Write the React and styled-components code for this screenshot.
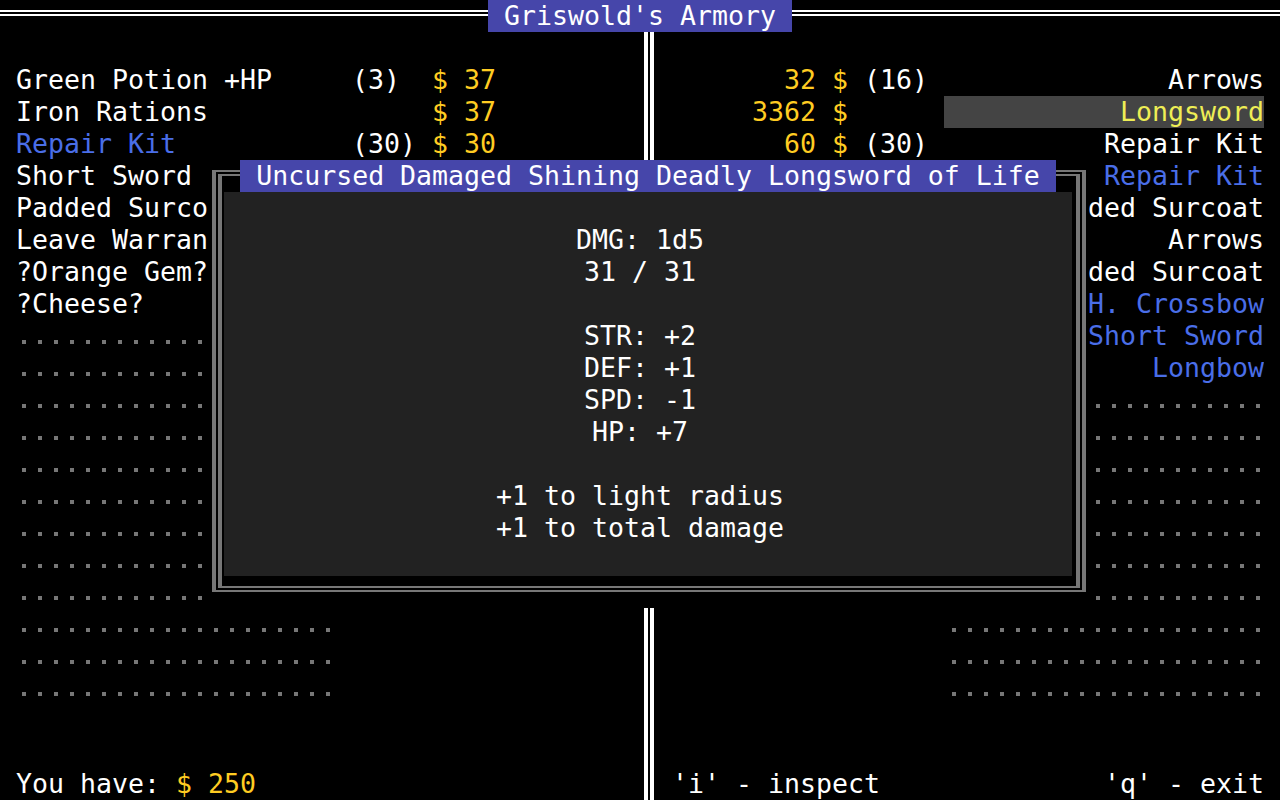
import React from "react";
import styled, { createGlobalStyle } from "styled-components";

const GlobalStyle = createGlobalStyle`
  html, body {
    margin: 0;
    padding: 0;
    background: #000;
  }
`;

// palette of the shop screen
const WHITE = "#ffffff";
const GOLD = "#ffcc22";
const BLUE = "#4a6ee8";
const PALE = "#eeee55";
const LINE = "#777777";

// rows under the inspect window show only the part of the name that sticks out
const leftItems = [
    { name: "Green Potion +HP", qty: "(3)", price: 37 },
    { name: "Iron Rations", qty: "", price: 37 },
    { name: "Repair Kit", qty: "(30)", price: 30, tone: "blue" },
    { name: "Short Sword" },
    { name: "Padded Surcoat" },
    { name: "Leave Warrant" },
    { name: "?Orange Gem?" },
    { name: "?Cheese?" },
];

const rightItems = [
    { name: "Arrows", qty: "(16)", price: 32 },
    { name: "Longsword", qty: "", price: 3362, tone: "selected" },
    { name: "Repair Kit", qty: "(30)", price: 60 },
    { name: "Repair Kit", tone: "blue" },
    { name: "Padded Surcoat" },
    { name: "Arrows" },
    { name: "Padded Surcoat" },
    { name: "H. Crossbow", tone: "blue" },
    { name: "Short Sword", tone: "blue" },
    { name: "Longbow", tone: "blue" },
];

const SLOTS = 20;

const stats = [
    "DMG: 1d5",
    "31 / 31",
    "",
    "STR: +2",
    "DEF: +1",
    "SPD: -1",
    "HP: +7",
    "",
    "+1 to light radius",
    "+1 to total damage",
];

const App = () => {
    const leftEmpty = SLOTS - leftItems.length;
    const rightEmpty = SLOTS - rightItems.length;
    return (
        <>
            <GlobalStyle />
            <Screen>
                <Header>
                    <Rule />
                    <Title>Griswold's Armory</Title>
                    <Rule />
                </Header>

                <Body>
                    {/* 상점 쪽 */}
                    <Panel>
                        <List>
                            {leftItems.map((item, i) => (
                                <LeftRow key={i}>
                                    <Name $tone={item.tone}>{item.name}</Name>
                                    <span />
                                    <span>{item.qty}</span>
                                    <span />
                                    {item.price != null && <Money>$ {item.price}</Money>}
                                </LeftRow>
                            ))}
                            {Array.from({ length: leftEmpty }).map((_, i) => (
                                <LeftRow key={"e" + i}>
                                    <Slot $offset={6} />
                                </LeftRow>
                            ))}
                        </List>
                        <Footer>
                            <span>
                                You have: <Money>$ 250</Money>
                            </span>
                        </Footer>
                    </Panel>

                    <DividerCell>
                        <Divider />
                    </DividerCell>

                    {/* 플레이어 쪽 */}
                    <Panel $right>
                        <List>
                            {rightItems.map((item, i) => (
                                <RightRow key={i}>
                                    <Price>{item.price}</Price>
                                    <Money>{item.price != null ? " $ " : ""}</Money>
                                    <span>{item.qty}</span>
                                    <Name $tone={item.tone} $right>
                                        {item.name}
                                    </Name>
                                </RightRow>
                            ))}
                            {Array.from({ length: rightEmpty }).map((_, i) => (
                                <RightRow key={"e" + i}>
                                    <span />
                                    <span />
                                    <span />
                                    <Slot $offset={8} />
                                </RightRow>
                            ))}
                        </List>
                        <Footer $spread>
                            <span>'i' - inspect</span>
                            <span>'q' - exit</span>
                        </Footer>
                    </Panel>
                </Body>

                <Modal>
                    <ModalTitle>Uncursed Damaged Shining Deadly Longsword of Life</ModalTitle>
                    <Frame>
                        <InnerFrame>
                            <Sheet>
                                {stats.map((line, i) => (
                                    <StatLine key={i}>{line}</StatLine>
                                ))}
                            </Sheet>
                        </InnerFrame>
                    </Frame>
                </Modal>
            </Screen>
        </>
    );
};

export default App;

const Screen = styled.div`
    position: relative;
    width: 1280px;
    height: 800px;
    overflow: hidden;
    background: #000;
    color: ${WHITE};
    font-family: "DejaVu Sans Mono", "Liberation Mono", monospace;
    font-size: 26.575px;
    line-height: 32px;
    white-space: pre;
    display: flex;
    flex-direction: column;
`;

const Header = styled.div`
    height: 32px;
    display: flex;
`;

const Rule = styled.div`
    flex: 1;
    height: 2px;
    margin-top: 10px;
    border-top: 2px solid ${WHITE};
    border-bottom: 2px solid ${WHITE};
`;

const Title = styled.div`
    background: #4646aa;
    padding: 0 16px;
    height: 32px;
`;

const Body = styled.div`
    flex: 1;
    display: grid;
    grid-template-columns: 640px 16px 624px;
`;

const Panel = styled.div`
    display: flex;
    flex-direction: column;
    padding: ${(p) => (p.$right ? "32px 16px 0 0" : "32px 0 0 16px")};
`;

const List = styled.div`
    display: flex;
    flex-direction: column;
`;

const LeftRow = styled.div`
    height: 32px;
    display: grid;
    grid-template-columns: 320px 16px 64px 16px 1fr;
`;

const RightRow = styled.div`
    height: 32px;
    display: grid;
    grid-template-columns: 160px 48px 80px 320px;
`;

const Name = styled.span`
    overflow: hidden;
    text-align: ${(p) => (p.$right ? "right" : "left")};
    color: ${(p) =>
        p.$tone === "blue" ? BLUE : p.$tone === "selected" ? PALE : WHITE};
    background: ${(p) => (p.$tone === "selected" ? "#444444" : "transparent")};
`;

const Money = styled.span`
    color: ${GOLD};
`;

const Price = styled.span`
    color: ${GOLD};
    text-align: right;
`;

const Slot = styled.span`
    display: block;
    width: 320px;
    height: 32px;
    background-image: linear-gradient(to right, ${LINE} 4px, transparent 4px);
    background-size: 16px 4px;
    background-position: ${(p) => p.$offset}px 20px;
    background-repeat: repeat-x;
`;

const Footer = styled.div`
    margin-top: auto;
    height: 32px;
    display: flex;
    justify-content: space-between;
    padding-left: ${(p) => (p.$spread ? "16px" : "0")};
`;

const DividerCell = styled.div`
    display: flex;
`;

const Divider = styled.div`
    width: 2px;
    margin-left: 4px;
    border-left: 4px solid ${WHITE};
    border-right: 4px solid ${WHITE};
`;

const Modal = styled.div`
    position: absolute;
    left: 208px;
    top: 160px;
    width: 880px;
    height: 448px;
    display: flex;
    box-sizing: border-box;
    padding: 10px 2px 16px 4px;
    background: #000;
`;

const ModalTitle = styled.div`
    position: absolute;
    top: 0;
    left: 32px;
    width: 816px;
    height: 32px;
    background: #4646aa;
    text-align: center;
    z-index: 1;
`;

const Frame = styled.div`
    flex: 1;
    display: flex;
    border-style: solid;
    border-color: ${LINE};
    border-width: 2px 4px;
    padding: 2px;
`;

const InnerFrame = styled.div`
    flex: 1;
    display: flex;
    border-style: solid;
    border-color: ${LINE};
    border-width: 2px 4px;
    padding: 16px 4px 10px 2px;
`;

const Sheet = styled.div`
    flex: 1;
    background: #222222;
    padding: 32px 16px 0 0;
    display: flex;
    flex-direction: column;
    align-items: center;
`;

const StatLine = styled.div`
    height: 32px;
`;
